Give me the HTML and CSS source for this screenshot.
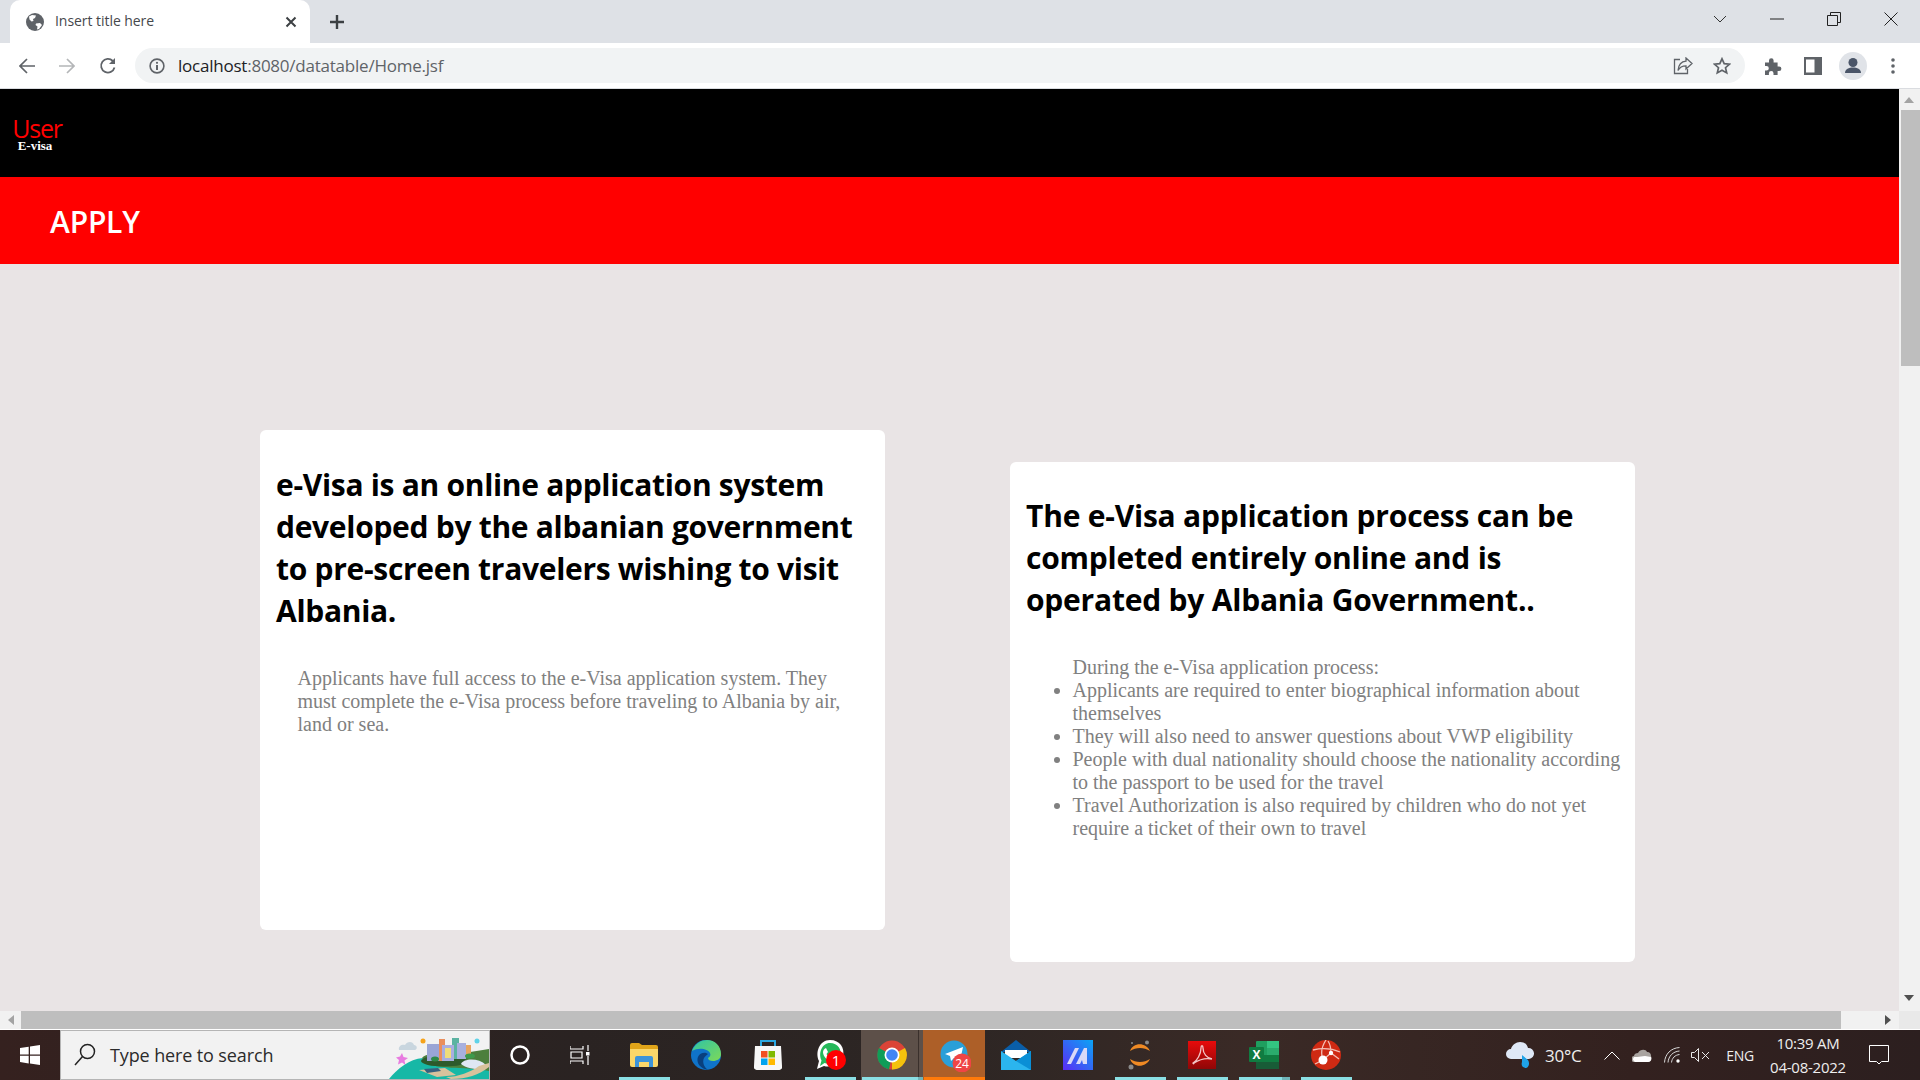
FILE: index.html
```html
<!DOCTYPE html>
<html lang="en">
<head>
<meta charset="utf-8">
<title>Insert title here</title>
<link rel="stylesheet" href="styles.css">
</head>
<body>
<div class="screen">
  <div class="tabstrip">
    <div class="tab">
      <svg class="fav" viewBox="0 0 18 18" width="18" height="18"><circle cx="9" cy="9" r="9" fill="#5f6368"/><path d="M3 3.500l3-1.500 4 .5-1 2.500-2 1 .5 2-2 .5-2-2zM10 10.500l4-.5 2 2-3 4-2 .5 .5-3-2-1.500z" fill="#fff"/></svg>
      <span class="tab-title">Insert title here</span>
      <svg class="tab-x" viewBox="0 0 12 12" width="12" height="12"><path d="M1.500 1.500l9 9M10.500 1.500l-9 9" stroke="#3c4043" stroke-width="2" fill="none"/></svg>
    </div>
    <div class="newtab"><svg viewBox="0 0 16 16" width="16" height="16"><path d="M8 1v14M1 8h14" stroke="#3c4043" stroke-width="2.400" fill="none"/></svg></div>
    <div class="grow"></div>
    <div class="winbtn"><svg viewBox="0 0 14 8" width="14" height="8"><path d="M1 1l6 6 6-6" stroke="#333" fill="none"/></svg></div>
    <div class="winbtn"><svg viewBox="0 0 14 2" width="14" height="2"><path d="M0 1h14" stroke="#222" fill="none"/></svg></div>
    <div class="winbtn"><svg viewBox="0 0 14 14" width="14" height="14"><path d="M.5 3.500h10v10H.5zM3.500 3.500V.5h10v10h-3" stroke="#222" fill="none"/></svg></div>
    <div class="winbtn winbtn-last"><svg viewBox="0 0 14 14" width="14" height="14"><path d="M.5.500l13 13M13.500.5l-13 13" stroke="#222" fill="none"/></svg></div>
  </div>
  <div class="toolbar">
    <div class="navbtn"><svg viewBox="0 0 16 16" width="16" height="16"><path d="M8 1L1 8l7 7M1 8h15" stroke="#5f6368" stroke-width="1.700" fill="none"/></svg></div>
    <div class="navbtn"><svg viewBox="0 0 16 16" width="16" height="16"><path d="M8 1l7 7-7 7M15 8H0" stroke="#b4b6b8" stroke-width="1.700" fill="none"/></svg></div>
    <div class="navbtn navbtn-reload"><svg viewBox="0 0 18 18" width="18" height="18"><path d="M15.500 10.500A6.800 6.800 0 1 1 13.800 4" stroke="#5f6368" stroke-width="1.800" fill="none"/><path d="M16 1v6h-6z" fill="#5f6368"/></svg></div>
    <div class="omnibox">
      <svg class="info" viewBox="0 0 16 16" width="16" height="16"><circle cx="8" cy="8" r="6.900" stroke="#5f6368" stroke-width="1.600" fill="none"/><path d="M8 7v5" stroke="#5f6368" stroke-width="2"/><circle cx="8" cy="4.800" r="1.100" fill="#5f6368"/></svg>
      <span class="url"><span class="url-host">localhost</span>:8080/datatable/Home.jsf</span>
      <div class="grow"></div>
      <div class="omnibtn"><svg viewBox="0 0 20 18" width="20" height="18"><path d="M7 2.500H1.500v14h13V12" stroke="#5f6368" stroke-width="1.300" fill="none"/><path d="M13 1l6 5.500-6 5.500V8.800C9 8.800 6.500 10.500 5 13.500 5.500 8 8.500 4.500 13 4.200z" stroke="#5f6368" stroke-width="1.300" fill="none"/></svg></div>
      <div class="omnibtn"><svg viewBox="0 0 18 18" width="18" height="18"><path d="M9 1.800l2.200 4.900 5.300.5-4 3.500 1.200 5.200L9 13.200l-4.700 2.700 1.200-5.200-4-3.500 5.300-.5z" stroke="#5f6368" stroke-width="1.700" fill="none"/></svg></div>
    </div>
    <div class="navbtn navbtn-first"><svg viewBox="0 0 18 18" width="18" height="18"><path d="M1 5.500h4V3.500a2.300 2.300 0 0 1 4.600 0v2h4v4h1.500a2.300 2.300 0 0 1 0 4.600h-1.500V18H9.500v-1.800a2.300 2.300 0 0 0-4.600 0V18H1v-4.500h1.500a2.300 2.300 0 0 0 0-4.600H1z" fill="#5f6368"/></svg></div>
    <div class="navbtn"><svg viewBox="0 0 18 18" width="18" height="18"><path d="M0 0h18v18H0zM2 2.500v13h8.500v-13z" fill="#5f6368" fill-rule="evenodd"/></svg></div>
    <div class="navbtn"><svg viewBox="0 0 28 28" width="28" height="28"><circle cx="14" cy="14" r="14" fill="#e0e3e8"/><circle cx="14" cy="10.500" r="4.500" fill="#4a5568"/><path d="M6 21c0-4 4-5.500 8-5.500s8 1.500 8 5.500z" fill="#4a5568"/></svg></div>
    <div class="navbtn"><svg viewBox="0 0 4 16" width="4" height="16"><circle cx="2" cy="2" r="1.800" fill="#5f6368"/><circle cx="2" cy="8" r="1.800" fill="#5f6368"/><circle cx="2" cy="14" r="1.800" fill="#5f6368"/></svg></div>
  </div>
  <div class="viewport">
    <div class="page-row">
      <div class="page">
        <header class="brand-bar">
          <div class="brand"><span class="brand-user">User</span><span class="brand-sub">E-visa</span></div>
        </header>
        <div class="apply-bar">APPLY</div>
        <main class="cards">
          <section class="card card-one">
            <h2>e-Visa is an online application system developed by the albanian government to pre-screen travelers wishing to visit Albania.</h2>
            <p>Applicants have full access to the e-Visa application system. They must complete the e-Visa process before traveling to Albania by air, land or sea.</p>
          </section>
          <section class="card card-two">
            <h2>The e-Visa application process can be completed entirely online and is operated by Albania Government..</h2>
            <div class="steps">
              <div class="steps-lead">During the e-Visa application process:</div>
              <ul>
                <li>Applicants are required to enter biographical information about themselves</li>
                <li>They will also need to answer questions about VWP eligibility</li>
                <li>People with dual nationality should choose the nationality according to the passport to be used for the travel</li>
                <li>Travel Authorization is also required by children who do not yet require a ticket of their own to travel</li>
              </ul>
            </div>
          </section>
        </main>
      </div>
      <div class="vscroll">
        <svg class="arrow-up" viewBox="0 0 10 6" width="10" height="6"><path d="M0 6l5-6 5 6z" fill="#a3a3a3"/></svg>
        <div class="vthumb"></div>
        <div class="grow"></div>
        <svg class="arrow-down" viewBox="0 0 10 6" width="10" height="6"><path d="M0 0l5 6 5-6z" fill="#505050"/></svg>
      </div>
    </div>
    <div class="hscroll">
      <svg class="arrow-left" viewBox="0 0 6 10" width="6" height="10"><path d="M6 0L0 5l6 5z" fill="#a3a3a3"/></svg>
      <div class="hthumb"></div>
      <svg class="arrow-right" viewBox="0 0 6 10" width="6" height="10"><path d="M0 0l6 5-6 5z" fill="#505050"/></svg>
      <div class="corner"></div>
    </div>
  </div>
  <div class="taskbar">
    <div class="start"><svg viewBox="0 0 20 20" width="20" height="20"><path d="M0 3l8.700-1.300v7.800H0zM10 1.500L20 0v9.500H10zM0 10.700h8.700v7.700L0 17.100zM10 10.700h10V20l-10-1.400z" fill="#fff"/></svg></div>
    <div class="search">
      <svg class="search-ico" viewBox="0 0 22 24" width="22" height="24"><circle cx="13.500" cy="8.500" r="7" stroke="#222" stroke-width="1.500" fill="none"/><path d="M8.500 13.500L1 22" stroke="#222" stroke-width="1.500"/></svg>
      <span class="search-text">Type here to search</span>
      <div class="grow"></div>
      <svg class="widget" viewBox="0 0 100 48" width="100" height="48">
        <path d="M10 19c-1-4 3-6 6-5 2-4 8-4 9 0 3 0 4 4 1 5z" fill="#c9d6df"/>
        <circle cx="34" cy="10" r="2.500" fill="#f6a31a"/><circle cx="88" cy="10" r="2.500" fill="#5fd3e8"/>
        <path d="M13 22l1.500 4 4.500 1-3.500 2.500 1 4.500-3.500-2.500-4 2 1-4.500-3-2.500 4-1z" fill="#e87be0"/>
        <path d="M0 48C8 38 20 28 34 27L100 24V48z" fill="#17b8a6"/>
        <path d="M33 27c6-7 27-3 42-5l25-4v22C80 36 50 38 40 33z" fill="#4c7f3d"/>
        <ellipse cx="55" cy="30" rx="23" ry="5.500" fill="#2d5a2c"/>
        <rect x="38" y="13" width="12" height="17" fill="#9aa5d6"/>
        <rect x="50" y="8" width="6" height="22" fill="#e98f5e"/>
        <rect x="63" y="7" width="7" height="21" fill="#5bb3a2"/>
        <rect x="53" y="14" width="12" height="16" fill="#a9aee0"/>
        <rect x="56" y="17" width="6" height="10" fill="#f0dd7a"/>
        <rect x="68" y="12" width="9" height="16" fill="#a8b0de"/>
        <rect x="77" y="14" width="5" height="10" fill="#e8a55f"/>
        <ellipse cx="46" cy="28" rx="4" ry="2.500" fill="#2f8a48"/>
        <ellipse cx="81" cy="25" rx="5" ry="2.500" fill="#3d9b4b"/>
        <path d="M72 33c3-6 18-6 25 1l-3 5c-8-1-18-2-22-6z" fill="#dfe7f4"/>
        <path d="M30 39l26-2 11 7-19 2z" fill="#d8c29c"/>
        <path d="M35 38l14-1 3 3-14 2z" fill="#35617f"/>
        <path d="M57 46c12 0 25-5 33-11l10-3v4c-10 8-22 12-38 12z" fill="#d8c29c"/>
      </svg>
    </div>
    <div class="tslot"><svg viewBox="0 0 20 20" width="20" height="20"><circle cx="10" cy="10" r="8.500" stroke="#fff" stroke-width="2.500" fill="none"/></svg></div>
    <div class="tslot"><svg viewBox="0 0 20 20" width="20" height="20"><path d="M0 1v3h13V1M0 19v-3h13v3M1 7h11v6H1zM18 0v6M18 11v9" stroke="#fff" stroke-width="1.200" fill="none"/><rect x="16" y="7" width="3.500" height="3.500" fill="#fff"/></svg></div>
    <div class="tgap"></div>
    <div class="tslot-app is-running"><svg viewBox="0 0 28 24" width="28" height="24"><path d="M0 2a2 2 0 0 1 2-2h7l3 2h14a2 2 0 0 1 2 2v3H0z" fill="#e0a419"/><path d="M0 6h28v16a2 2 0 0 1-2 2H2a2 2 0 0 1-2-2z" fill="#fbd769"/><path d="M5 24V15a2 2 0 0 1 2-2h14a2 2 0 0 1 2 2v9h-4v-5H9v5z" fill="#3d94d9"/></svg></div>
    <div class="tslot-app"><svg viewBox="0 0 30 30" width="30" height="30"><defs><linearGradient id="edgeA" x1="0" y1="0" x2="1" y2="1"><stop offset="0" stop-color="#2ec4a7"/><stop offset="1" stop-color="#7ed957"/></linearGradient></defs><circle cx="15" cy="15" r="15" fill="#0f73c9"/><path d="M1 11C4 3 11 0 16 0c8 0 14 6 14 14 0 5-4 7-8 7-3 0-5-1-5-3 2-1 3-3 2-5-2-4-11-6-18-2z" fill="url(#edgeA)"/><path d="M15 13c-6-1-10 4-8 10 1 3 5 6 10 7-4-3-6-8-4-12 1-2 3-3 4-4z" fill="#093f7e"/></svg></div>
    <div class="tslot-app"><svg viewBox="0 0 28 30" width="28" height="30"><path d="M7 6V1h14v5" stroke="#2aa7e0" stroke-width="2" fill="none"/><path d="M1 6h26l1 20a3 3 0 0 1-3 4H3a3 3 0 0 1-3-4z" fill="#f7f7f7"/><rect x="7" y="11" width="6.500" height="6.500" fill="#f25022"/><rect x="14.500" y="11" width="6.500" height="6.500" fill="#7fba00"/><rect x="7" y="18.500" width="6.500" height="6.500" fill="#00a4ef"/><rect x="14.500" y="18.500" width="6.500" height="6.500" fill="#ffb900"/></svg></div>
    <div class="tslot-app is-running"><svg viewBox="-2 0 34 32" width="34" height="32"><path d="M2 30l2-8C0 14 4 1 15 1c10 0 15 8 13 16-2 8-12 12-19 10z" fill="#fff"/><path d="M5 27l1.500-5.500C3 14 7 4 15 4c8 0 12 7 10.500 13-1.500 6-10 9-16 7z" fill="#25b85a"/><path d="M11 9l2 4-1.500 2c1 2 2.500 3.500 4.500 4.500l2-1.500 3.500 2c-1 3-3 3-5 2.500-5-1.500-8-5-8.500-9 0-2 1-4 3-4.500z" fill="#fff"/><circle cx="21" cy="21" r="10" fill="#f00"/><text x="21" y="27" class="badge-one">1</text></svg></div>
    <div class="tslot-app is-active"><svg viewBox="0 0 30 30" width="30" height="30"><circle cx="15" cy="15" r="14.500" fill="#db4437"/><path d="M15 15L28 8A14.500 14.500 0 0 1 15 29.500z" fill="#f4c20d"/><path d="M15 15L12 29.200A14.500 14.500 0 0 1 2 8z" fill="#0f9d58"/><circle cx="15" cy="15" r="7.500" fill="#fff"/><circle cx="15" cy="15" r="5.800" fill="#4285f4"/></svg></div>
    <div class="tslot-app is-orange"><svg viewBox="-3 -2 34 34" width="34" height="34"><circle cx="14" cy="14" r="13.500" fill="#2a9fd8"/><path d="M5 14L23 7 20 21 14 18 11 21 10 16z" fill="#fff"/><circle cx="22" cy="23" r="9.500" fill="#ef4444"/><text x="22" y="27.500" class="badge-two">24</text></svg></div>
    <div class="tslot-app"><svg viewBox="0 0 30 30" width="30" height="30"><path d="M15 0l15 12H0z" fill="#0a5ea8"/><path d="M4 10h22v8H4z" fill="#fff"/><path d="M0 11l15 10 15-10v19H0z" fill="#2bb5ee"/><path d="M30 30L15 21 30 11z" fill="#0a8fd6"/></svg></div>
    <div class="tslot-app"><svg viewBox="0 0 30 30" width="30" height="30"><defs><linearGradient id="maA" x1="0" y1="1" x2="1" y2="0"><stop offset="0" stop-color="#5b2bf5"/><stop offset="1" stop-color="#0aa5f5"/></linearGradient></defs><rect width="30" height="30" fill="url(#maA)"/><path d="M4 24l8-16h4L8 24zM13 24l8-16h3v16h-4l-1-4-2 4z" fill="#d9d9f7"/></svg></div>
    <div class="tslot-app is-running"><svg viewBox="0 0 24 30" width="24" height="30"><path d="M2 11C5 2 18 2 22 11 16 7 8 7 2 11zM2 19c6 4 14 4 20 0-4 9-17 9-20 0z" fill="#f08a24"/><circle cx="19" cy="2.500" r="2" fill="#8a8a8a"/><circle cx="3" cy="27" r="2.500" fill="#8a8a8a"/><circle cx="4" cy="3" r="1" fill="#8a8a8a"/></svg></div>
    <div class="tslot-app is-running"><svg viewBox="0 0 28 28" width="28" height="28"><defs><linearGradient id="pdfA" x1="0" y1="0" x2="0" y2="1"><stop offset="0" stop-color="#e80b0b"/><stop offset="1" stop-color="#8f0707"/></linearGradient></defs><rect width="28" height="28" fill="url(#pdfA)"/><path d="M5 22c4-2 8-9 8-15 0-3 2-3 2 0 0 6 4 10 9 11-5-1-12 0-18 4 0 1-1 1-1 0z" stroke="#f2c6c6" stroke-width="1.300" fill="none"/></svg></div>
    <div class="tslot-app is-running is-stacked"><svg viewBox="0 0 30 28" width="30" height="28"><rect x="7" width="23" height="28" rx="1" fill="#1f9f5f"/><rect x="18" width="12" height="7" fill="#33c481"/><rect x="18" y="7" width="12" height="7" fill="#2bab6d"/><rect x="7" y="14" width="23" height="7" fill="#107c41"/><rect x="7" y="21" width="23" height="7" fill="#185c37"/><rect y="6" width="15" height="15" rx="1" fill="#107c41"/><text x="7.500" y="18" class="badge-x">X</text></svg></div>
    <div class="tslot-app is-running"><svg viewBox="0 0 30 30" width="30" height="30"><circle cx="15" cy="15" r="15" fill="#cf2a13"/><path d="M2 10c8-2 18-2 27 2M15 0c-4 6-6 12-3 20M12 20l8-7M20 13l8 6M12 20l-8 4M20 13C20 8 19 4 17 1" stroke="#f3c0b6" stroke-width="1.300" fill="none"/><circle cx="12" cy="20" r="4.500" fill="#fff"/><circle cx="20" cy="13" r="2.200" fill="#fff"/></svg></div>
    <div class="grow"></div>
    <div class="tray-item tray-weather"><svg viewBox="0 0 28 26" width="28" height="26"><path d="M5 17a5 5 0 0 1 0-10c1-4 5-7 9-7s7 2 8 6a5.500 5.500 0 0 1 1 11z" fill="#dfe8f6"/><path d="M16 13l6 5c2 3 1 7-2 8-4 0-5-3-4-6z" fill="#1fa3e8"/></svg></div>
    <div class="tray-item tray-temp">30°C</div>
    <div class="tray-item tray-chevron"><svg viewBox="0 0 16 9" width="16" height="9"><path d="M.5 8.500L8 1l7.500 7.500" stroke="#fff" fill="none"/></svg></div>
    <div class="tray-item tray-one"><svg viewBox="0 0 20 14" width="20" height="14"><path d="M3 14a3 3 0 0 1-1-6c0-2 2-3 4-3 2-4 8-4 9-1 3 0 4 2 4 4 1 3-1 6-3 6z" fill="#a9a4a0"/><path d="M3 14a3 3 0 0 1-1-5h3c3 0 5-1 8-1l6 1c1 2 0 5-3 5z" fill="#fff"/></svg></div>
    <div class="tray-item tray-wifi"><svg viewBox="0 0 16 16" width="16" height="16"><path d="M.5 15.500C1 7 7 1 15.500 .5M4 15.500C4.500 9 9 4.500 15.500 4M7.500 15.500C8 11 11 8 15.500 7.500" stroke="#d8d8d8" stroke-width="1" fill="none"/><circle cx="14" cy="14" r="1.700" fill="#fff"/></svg></div>
    <div class="tray-item tray-sound"><svg viewBox="0 0 20 14" width="20" height="14"><path d="M.5 4.500h3l4-4v13l-4-4h-3zM11 4l7 7M18 4l-7 7" stroke="#e8e8e8" fill="none"/></svg></div>
    <div class="tray-item tray-lang">ENG</div>
    <div class="tray-item tray-clock"><span>10:39 AM</span><span>04-08-2022</span></div>
    <div class="tray-item tray-note"><svg viewBox="0 0 20 20" width="20" height="20"><path d="M.5.500h19v16h-7l-2.500 2.500-2.500-2.500h-7z" stroke="#fff" fill="none"/></svg></div>
    <div class="tray-end"></div>
  </div>
</div>
</body>
</html>
```
FILE: styles.css
```css
* { box-sizing: border-box; }
html, body { margin: 0; height: 100%; overflow: hidden; }
body { font-family: "Open Sans", "Noto Sans", sans-serif; }
svg { display: block; flex: none; }
.grow { flex: 1 1 auto; }
.screen { width: 1920px; height: 1080px; display: flex; flex-direction: column; }

.tabstrip { height: 43px; background: #dee1e6; display: flex; align-items: stretch; padding-left: 10px; }
.tab { width: 300px; background: #fff; border-radius: 10px 10px 0 0; display: flex; align-items: center; padding: 0 13px 0 16px; }
.tab-title { margin-left: 11px; padding-bottom: 2px; font-size: 14px; color: #45484c; flex: 1; letter-spacing: -.05px; }
.newtab { width: 54px; display: flex; align-items: center; justify-content: center; }
.winbtn { width: 57px; display: flex; align-items: center; justify-content: center; padding-bottom: 5px; }
.winbtn-last { width: 58px; }

.toolbar { height: 46px; background: #fff; border-bottom: 1px solid #dadce0; display: flex; align-items: center; padding: 0 7px; }
.navbtn { width: 40px; height: 40px; display: flex; align-items: center; justify-content: center; }
.navbtn-first { margin-left: 8px; }
.navbtn-reload { padding-left: 2px; }
.omnibox { margin-left: 8px; width: 1610px; height: 35px; background: #f1f3f4; border-radius: 18px; display: flex; align-items: center; padding: 0 4px 0 14px; }
.url { margin-left: 13px; font-size: 17px; letter-spacing: -.23px; color: #5f6368; }
.url-host { color: #202124; }
.omnibtn { width: 39px; display: flex; justify-content: center; }

.viewport { flex: 1 1 auto; min-height: 0; display: flex; flex-direction: column; }
.page-row { flex: 1 1 auto; min-height: 0; display: flex; }
.page { flex: 1 1 auto; min-width: 0; background: #e9e4e5; display: flex; flex-direction: column; }
.brand-bar { height: 88px; background: #000; display: flex; align-items: center; padding: 0 0 0 12px; }
.brand { display: flex; flex-direction: column; align-items: center; width: 50px; }
.brand-user { color: #f00; font-size: 25px; line-height: 26px; letter-spacing: -1.2px; }
.brand-sub { color: #fff; margin-top: -1px; padding-right: 4px; font: bold 13px/11px "Liberation Serif", serif; }
.apply-bar { height: 87px; background: #f00; color: #fff; display: flex; align-items: center; padding: 2px 0 0 50px; font-size: 30px; font-weight: 600; letter-spacing: -.2px; }
.cards { flex: 1 1 auto; display: flex; align-items: flex-start; padding-left: 260px; gap: 125px; }
.card { width: 625px; height: 500px; background: #fff; border-radius: 6px; padding: 16px; }
.card-one { margin-top: 166px; }
.card-two { margin-top: 198px; padding-right: 8px; }
.card h2 { margin: 18px 0 35px; padding-right: 8px; font-family: "Open Sans", sans-serif; font-size: 30px; line-height: 42px; font-weight: 700; letter-spacing: -.3px; color: #000; }
.card-two h2 { margin: 17px 0 35px; letter-spacing: -.22px; }
.card p { margin: 0; padding-left: 21.500px; font: 20px/23px "Liberation Serif", serif; color: #808080; }
.steps { font: 20px/23px "Liberation Serif", serif; color: #808080; }
.steps-lead { padding-left: 46.500px; }
.steps ul { margin: 0; padding: 0 0 0 46.500px; }

.vscroll { width: 21px; background: #f1f1f1; display: flex; flex-direction: column; align-items: flex-end; }
.arrow-up { margin: 8px 6px 7px 0; }
.vthumb { width: 19px; height: 256px; background: #bebebe; }
.arrow-down { margin: 0 6px 10px 0; }
.hscroll { height: 19px; background: #f1f1f1; border-bottom: 1px solid #fff; display: flex; align-items: center; }
.arrow-left { margin-left: 8px; }
.hthumb { width: 1820px; height: 18px; margin-left: 7px; background: #bebebe; }
.arrow-right { margin-left: 44px; }
.corner { width: 21px; height: 18px; margin-left: 8px; background: #e9e9e9; }

.taskbar { height: 50px; background: linear-gradient(90deg, #35211f 0%, #2a2322 30%, #2d2624 50%, #3a2a26 65%, #33211f 85%, #2c1f1f 100%); display: flex; align-items: stretch; color: #fff; }
.start { width: 60px; display: flex; align-items: center; justify-content: center; }
.search { width: 430px; background: #f2f2f2; border: 1px solid #b5b5b5; display: flex; align-items: center; padding-left: 13px; overflow: hidden; }
.search-text { margin-left: 14px; font-size: 18px; color: #2b2b2b; letter-spacing: -.12px; }
.tslot { width: 60px; display: flex; align-items: center; justify-content: center; }
.tgap { width: 3px; }
.tslot-app { width: 62px; position: relative; display: flex; align-items: center; justify-content: center; }
.is-running::after { content: ""; position: absolute; left: 6px; right: 5px; bottom: 0; height: 3px; background: #8adfe4; }
.is-stacked::after { background: linear-gradient(90deg, #8adfe4 0 85%, #6fb4b8 85%); }
.is-active { background: linear-gradient(90deg, #5d5049 0 92%, #3a302c 92% 94%, #5d5049 94%); }
.is-active::after { content: ""; position: absolute; left: 1px; right: 0; bottom: 0; height: 3px; background: linear-gradient(90deg, #8adfe4 0 92%, #6fb4b8 92%); }
.is-orange { background: #ad5f28; }
.is-orange::after { content: ""; position: absolute; left: 1px; right: 0; bottom: 0; height: 3px; background: #ff7a0a; }
.badge-one { font: 15px "Open Sans", sans-serif; fill: #fff; text-anchor: middle; }
.badge-two { font: 12px "Open Sans", sans-serif; fill: #fff; text-anchor: middle; }
.badge-x { font: bold 12px "Open Sans", sans-serif; fill: #fff; text-anchor: middle; }
.tray-item { display: flex; align-items: center; justify-content: center; font-size: 16px; color: #eee; }
.tray-weather { width: 40px; }
.tray-temp { width: 56px; justify-content: flex-start; padding-left: 5px; font-size: 17px; letter-spacing: -.2px; }
.tray-chevron { width: 32px; }
.tray-one { width: 28px; }
.tray-wifi { width: 31px; }
.tray-sound { width: 28px; }
.tray-lang { width: 50px; font-size: 14px; letter-spacing: -.3px; }
.tray-clock { width: 86px; flex-direction: column; font-size: 15px; line-height: 24px; letter-spacing: -.25px; }
.tray-note { width: 56px; }
.tray-end { width: 13px; }
```
